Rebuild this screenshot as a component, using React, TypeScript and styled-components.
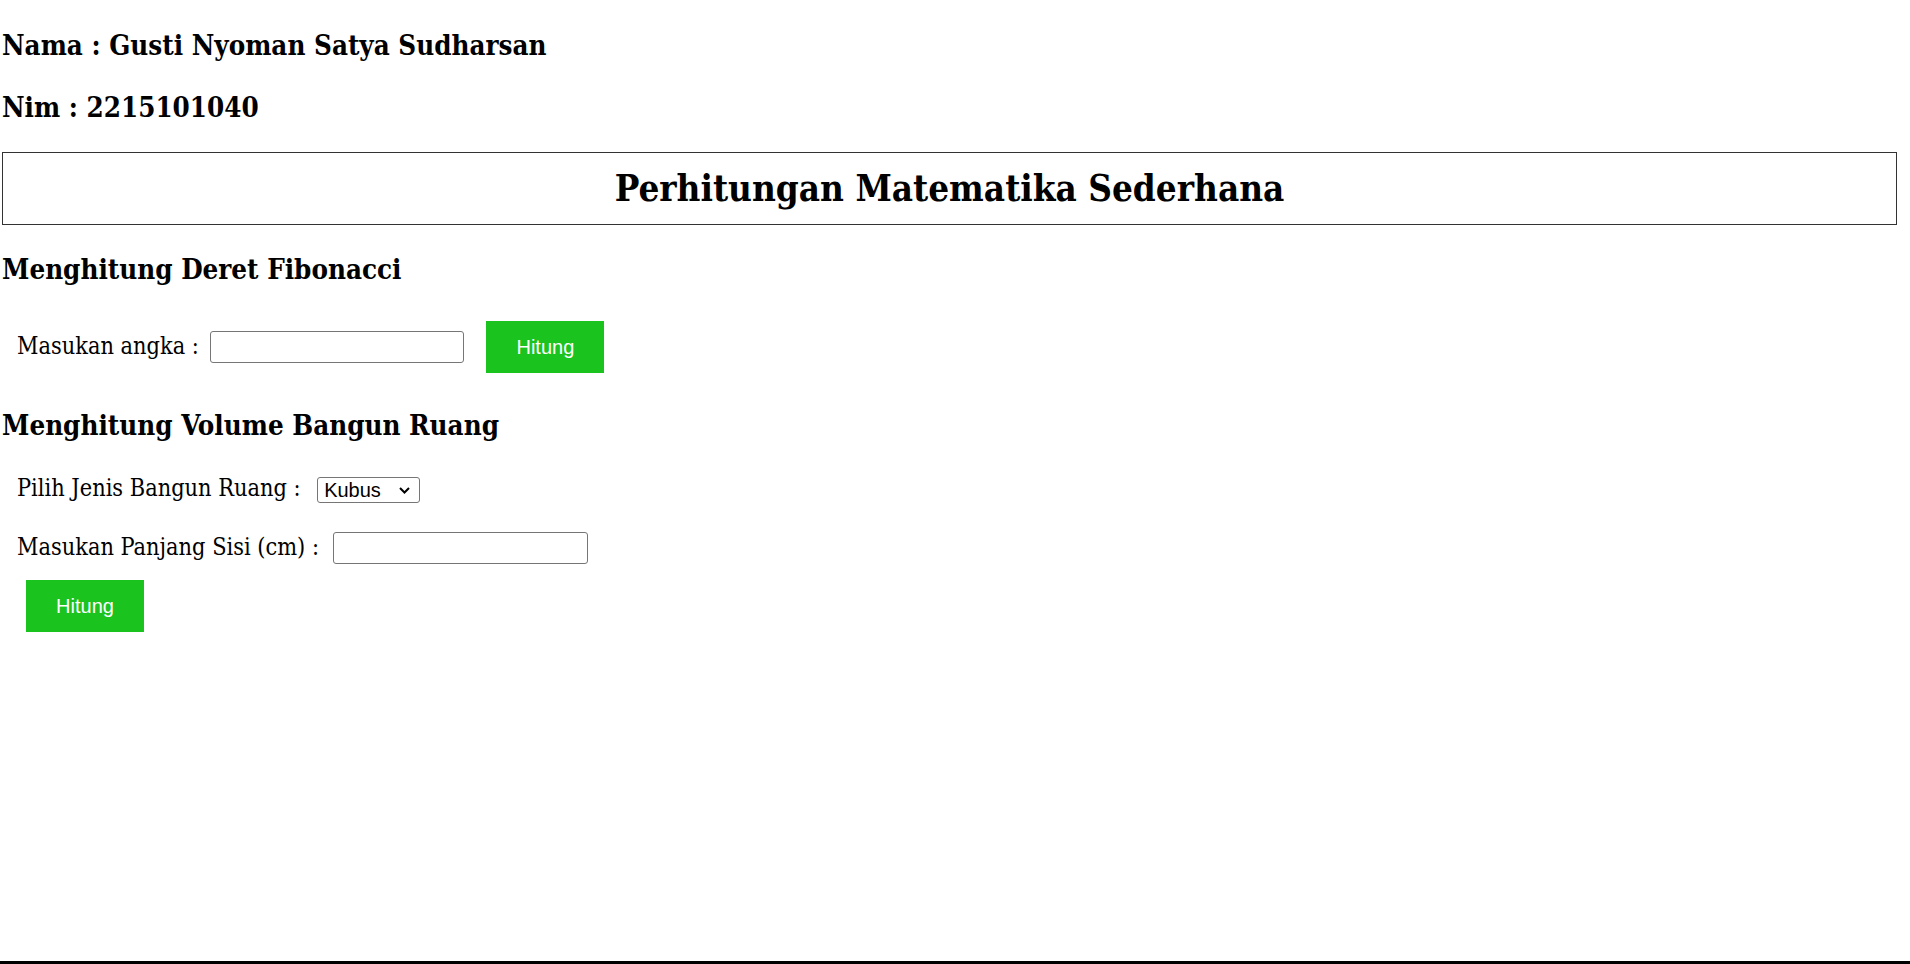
import React from "react";
import styled, { createGlobalStyle } from "styled-components";

const GlobalStyle = createGlobalStyle`
  html, body { margin: 0; padding: 0; background: #ffffff; }
  body {
    font-family: "DejaVu Serif Condensed", "DejaVu Serif", "Liberation Serif", serif;
    font-stretch: condensed;
    color: #000000;
  }
`;

const Page = styled.div`
  min-height: 100vh;
  display: flex;
  flex-direction: column;
  box-sizing: border-box;
`;

const Main = styled.main`
  flex: 1;
  display: flex;
  flex-direction: column;
  align-items: stretch;
  padding: 0 13px 0 2px;
`;

const Heading = styled.h3<{ $top: number; $bottom?: number }>`
  margin: ${(p) => p.$top}px 0 ${(p) => p.$bottom ?? 0}px;
  font-size: 27.5px;
  line-height: 32px;
  font-weight: bold;
`;

const TitleBox = styled.div`
  margin-top: 29px;
  border: 1px solid #333333;
  padding: 15px 0;
  text-align: center;
`;

const Title = styled.h2`
  margin: 0;
  font-size: 36.5px;
  line-height: 41px;
  font-weight: bold;
`;

const FormRow = styled.div<{ $top: number }>`
  display: flex;
  align-items: center;
  margin-top: ${(p) => p.$top}px;
  padding-left: 15px;
`;

const Label = styled.label<{ $gap: number }>`
  font-size: 23.3px;
  line-height: 27px;
  padding-bottom: 4px;
  margin-right: ${(p) => p.$gap}px;
  white-space: nowrap;
`;

const TextInput = styled.input<{ $width: number }>`
  box-sizing: border-box;
  width: ${(p) => p.$width}px;
  height: 32px;
  border: 1px solid #767676;
  border-radius: 3px;
  padding: 1px 3px;
  font-family: "Liberation Sans", Arial, sans-serif;
  font-size: 20px;
  background: #ffffff;
  outline: none;
`;

const SelectWrap = styled.span`
  position: relative;
  display: inline-flex;
`;

const Select = styled.select`
  box-sizing: border-box;
  appearance: none;
  -webkit-appearance: none;
  width: 103px;
  height: 26px;
  border: 1px solid #767676;
  border-radius: 3px;
  padding: 0 0 0 6px;
  font-family: "Liberation Sans", Arial, sans-serif;
  font-size: 20px;
  line-height: 24px;
  color: #000000;
  background: #ffffff;
`;

const Chevron = styled.svg`
  position: absolute;
  right: 10px;
  top: 10px;
  width: 11px;
  height: 7px;
  pointer-events: none;
`;

const Button = styled.button<{ $left: number }>`
  box-sizing: border-box;
  width: 118px;
  height: 52px;
  margin-left: ${(p) => p.$left}px;
  padding: 0;
  border: none;
  background: #1bc31f;
  color: #ffffff;
  font-family: "Liberation Sans", Arial, sans-serif;
  font-size: 20px;
  cursor: pointer;
`;

const Footer = styled.footer`
  height: 3px;
  background: #000000;
`;

export default function App() {
  return (
    <Page>
      <GlobalStyle />
      <Main>
        <Heading $top={29}>Nama : Gusti Nyoman Satya Sudharsan</Heading>
        <Heading $top={30}>Nim : 2215101040</Heading>
        <TitleBox>
          <Title>Perhitungan Matematika Sederhana</Title>
        </TitleBox>
        <Heading $top={28}>Menghitung Deret Fibonacci</Heading>
        <FormRow $top={36}>
          <Label $gap={11.5} htmlFor="angka">
            Masukan angka :
          </Label>
          <TextInput id="angka" type="text" $width={254} />
          <Button $left={22}>Hitung</Button>
        </FormRow>
        <Heading $top={36}>Menghitung Volume Bangun Ruang</Heading>
        <FormRow $top={33}>
          <Label $gap={16.5} htmlFor="jenis">
            Pilih Jenis Bangun Ruang :
          </Label>
          <SelectWrap>
            <Select id="jenis" defaultValue="kubus">
              <option value="kubus">Kubus</option>
              <option value="balok">Balok</option>
              <option value="bola">Bola</option>
            </Select>
            <Chevron viewBox="0 0 11 7" aria-hidden="true">
              <path d="M1 1 L5.5 5.5 L10 1" fill="none" stroke="#000" strokeWidth="2" />
            </Chevron>
          </SelectWrap>
        </FormRow>
        <FormRow $top={27}>
          <Label $gap={14} htmlFor="sisi">
            Masukan Panjang Sisi (cm) :
          </Label>
          <TextInput id="sisi" type="text" $width={255} />
        </FormRow>
        <FormRow $top={16}>
          <Button $left={9}>Hitung</Button>
        </FormRow>
      </Main>
      <Footer />
    </Page>
  );
}
